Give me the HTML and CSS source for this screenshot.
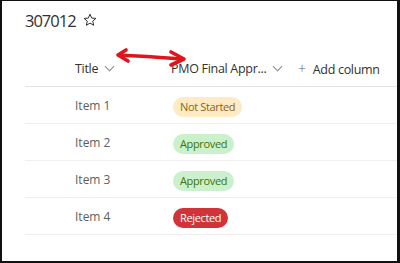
FILE: index.html
```html
<!DOCTYPE html>
<html lang="en">
<head>
    <meta charset="UTF-8">
    <title>307012</title>
    <link rel="stylesheet" href="styles.css">
</head>
<body>
    <div class="frame">
        <div class="heading">
            <span class="list-name">307012</span>
            <svg class="star" width="14" height="14" viewBox="0 0 14 14">
                <path d="M7 1.2 L8.7 5.1 L12.9 5.4 L9.7 8.2 L10.7 12.3 L7 10.1 L3.3 12.3 L4.3 8.2 L1.1 5.4 L5.3 5.1 Z" fill="none" stroke="#323130" stroke-width="1" stroke-linejoin="round"/>
            </svg>
        </div>

        <div class="grid">
            <div class="row head">
                <div class="check"></div>
                <div class="col-title">Title <span class="chev"></span></div>
                <div class="col-pmo">PMO Final Appr... <span class="chev"></span></div>
                <div class="col-add"><span class="plus">+</span>Add column</div>
            </div>
            <div class="row">
                <div class="check"></div>
                <div class="col-title item">Item 1</div>
                <div class="col-pmo"><span class="pill pending">Not Started</span></div>
            </div>
            <div class="row">
                <div class="check"></div>
                <div class="col-title item">Item 2</div>
                <div class="col-pmo"><span class="pill approved">Approved</span></div>
            </div>
            <div class="row">
                <div class="check"></div>
                <div class="col-title item">Item 3</div>
                <div class="col-pmo"><span class="pill approved">Approved</span></div>
            </div>
            <div class="row">
                <div class="check"></div>
                <div class="col-title item">Item 4</div>
                <div class="col-pmo"><span class="pill rejected">Rejected</span></div>
            </div>
        </div>

        <!-- hand drawn annotation -->
        <svg class="arrow" width="80" height="24" viewBox="0 0 80 24">
            <path d="M5 8 C22 9 45 10 67 12" fill="none" stroke="#e0141b" stroke-width="3.6" stroke-linecap="round"/>
            <path d="M12 3 L4 8 L14 14" fill="none" stroke="#e0141b" stroke-width="3.6" stroke-linecap="round" stroke-linejoin="round"/>
            <path d="M57 5 L70 12 L57 18" fill="none" stroke="#e0141b" stroke-width="3.6" stroke-linecap="round" stroke-linejoin="round"/>
        </svg>
    </div>
</body>
</html>
```

FILE: styles.css
```css
body {
    margin: 0;
    font-family: "Open Sans", "Noto Sans", sans-serif;
    color: #323130;
    background: #fff;
}
.frame {
    position: relative;
    height: 263px;
    box-sizing: border-box;
    border-top: 1px solid #111;
    border-left: 2px solid #111;
    border-right: 3px solid #111;
    border-bottom: 2px solid #111;
    padding-left: 23px;
}
.heading {
    height: 49px;
    display: flex;
    align-items: flex-start;
    padding-top: 9px;
    box-sizing: border-box;
}
.list-name {
    font-size: 16.5px;
    line-height: 22px;
    letter-spacing: -1px;
}
.star {
    margin-left: 7px;
    margin-top: 3px;
}
.row {
    display: flex;
    align-items: center;
    height: 36px;
    border-bottom: 1px solid #f0efee;
}
.row.head {
    border-bottom-color: #e6e4e2;
    font-size: 12.5px;
    letter-spacing: -0.3px;
    color: #323130;
}
.check {
    width: 50px;
    flex: none;
}
.col-title {
    width: 96px;
    flex: none;
}
.col-pmo {
    width: 127px;
    flex: none;
    padding-left: 2px;
    box-sizing: border-box;
}
.head .col-pmo {
    padding-left: 0;
}
.item {
    font-size: 12px;
    color: #605e5c;
}
.chev {
    display: inline-block;
    width: 6px;
    height: 6px;
    border-right: 1px solid #8a8886;
    border-bottom: 1px solid #8a8886;
    transform: rotate(45deg);
    margin-left: 5px;
    position: relative;
    top: -3px;
}
.plus {
    color: #605e5c;
    margin-right: 7px;
    font-size: 14px;
    font-weight: 300;
}
.pill {
    display: inline-block;
    height: 20px;
    line-height: 20px;
    padding: 0 7px;
    border-radius: 10px;
    font-size: 11px;
    letter-spacing: -0.35px;
}
.pending {
    background: #feebc4;
    color: #8a6420;
}
.approved {
    background: #caf0cc;
    color: #437406;
}
.rejected {
    background: #d13438;
    color: #fff;
}
.arrow {
    position: absolute;
    left: 112px;
    top: 46px;
}
```
